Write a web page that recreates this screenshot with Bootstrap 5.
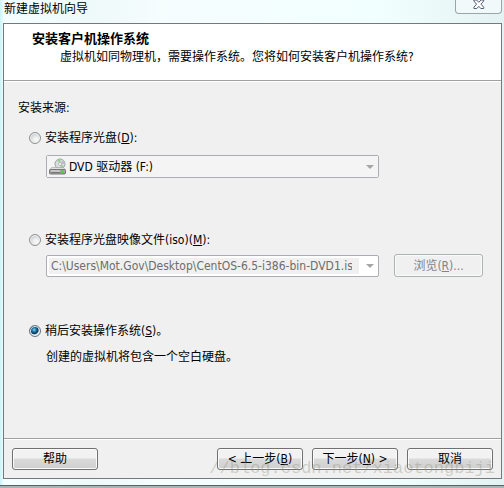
<!DOCTYPE html>
<html lang="zh-CN">
<head>
<meta charset="utf-8">
<meta name="viewport" content="width=device-width, initial-scale=1">
<title>新建虚拟机向导</title>
<link href="https://cdn.jsdelivr.net/npm/bootstrap@5.3.0/dist/css/bootstrap.min.css" rel="stylesheet">
<style>
body { font: 12px/18px "DejaVu Sans Condensed", "Noto Sans CJK SC", sans-serif; color: #000; background: #f0fcfc; }
.wizard { background: linear-gradient(90deg, #c8f4fa 0, #f4fefe 4px, #eef9fa 90px, #f5fdfd 160px, #f2ffff 75%, #e4f2f3 100%); border-bottom: 2px solid #a9b4b4; box-shadow: inset 0 -1px #596264; padding: 0 2px 7px 3px; }
.title-bar { height: 23px; padding-left: 1px; line-height: 18px; }
.close-btn { width: 47px; height: 14px; border: 1px solid #9ba4a8; border-top: 0; border-radius: 0 0 4px 4px; background: #f1f9fa; }
.pane { border: 1px solid #747a7c; background: #f0f0f0; }
.head { height: 57px; padding: 6px 28px; border-bottom: 1px solid #a0a0a0; box-shadow: 0 1px #fff; }
.head h1 { font-size: 13px; line-height: 18px; }
.head p { padding-left: 28px; }
.body-area { padding: 18px 18px 0 14px; }
.choice { padding-left: 11px; }
.choice label { line-height: 20px; }
.detail { padding-left: 17px; }
.radio-dot { appearance: none; width: 12px; height: 12px; margin: 0 4px 0 0; border: 1px solid #8e8f8f; border-radius: 50%; background: radial-gradient(circle at 60% 65%, #f4f4f4 0 20%, #c5c9ce 75%); box-shadow: inset 0 0 0 1px #f4f4f4; }
.radio-dot:checked { border-color: #67747d; background: radial-gradient(circle at 42% 38%, #7ed4f3 0, #176895 28%, #0b3553 46%, #d3dce2 58%); }
.combo { border: 1px solid #abadb3; border-radius: 2px; }
.drive-combo { height: 23px; }
.drive-combo select { appearance: none; display: block; width: 100%; height: 21px; padding: 0 20px 0 22px; border: 0; background: #f4f4f4; color: #000; opacity: 1; }
.drive-icon { left: 2px; top: 2px; }
.combo-arrow { right: 4px; top: 9px; }
.iso-combo { height: 22px; background: #fff; padding: 2px 4px 2px 2px; }
.iso-combo input { min-width: 0; height: 16px; padding: 0 7px 0 2px; border: 0; background: #f0f0f0; color: #6d6d6d; margin-right: 7px; }
.iso-combo button { padding: 0; border: 0; background: none; }
.wiz-btn { --bs-btn-color: #000; --bs-btn-border-color: #707070; --bs-btn-font-size: 12px; --bs-btn-line-height: 18px; --bs-btn-padding-x: 0; --bs-btn-padding-y: 1px; --bs-btn-border-radius: 3px; width: 86px; height: 22px; background: linear-gradient(#f2f2f2 0 45%, #dadada 50%, #cfcfcf); box-shadow: inset 0 0 0 1px #fbfbfb; }
.browse-btn { --bs-btn-disabled-color: #838383; --bs-btn-disabled-border-color: #adb2b5; --bs-btn-disabled-opacity: 1; width: 89px; height: 23px; background: #f4f4f4; margin-left: 15px; }
.source-title { margin-bottom: 11px; }
.gap-first { margin-bottom: 52px; }
.gap-second { margin-bottom: 44px; }
.option-row { margin-bottom: 7px; }
.iso-row { margin-bottom: 4px; }
.browse-space { margin-right: 104px; }
.foot { height: 40px; padding: 1px 8px 0; border-top: 1px solid #a0a0a0; box-shadow: inset 0 1px #fff; gap: 9px; }
.watermark { right: 9px; bottom: 6px; font: 17px/22px "Liberation Mono", monospace; color: rgba(145, 145, 125, .38); pointer-events: none; }
</style>
<script src="https://cdn.jsdelivr.net/npm/bootstrap@5.3.0/dist/js/bootstrap.bundle.min.js"></script>
</head>
<body>
<main class="wizard position-relative min-vh-100 d-flex flex-column">
  <header class="title-bar d-flex justify-content-between align-items-start">
    <span>新建虚拟机向导</span>
    <button type="button" class="close-btn p-0 d-flex justify-content-center align-items-start" aria-label="关闭">
      <svg width="12" height="9" viewBox="0 0 12 9"><path d="M3.500 0 5.800 2.300 8.100 0h2.600v1L8 4.200l2.700 3v1.300H7.800l-2-2.200-2 2.200H.900V7.200l2.700-3L.900 1V0z" fill="#fff" stroke="#555d75" stroke-width="1"/></svg>
    </button>
  </header>
  <section class="pane flex-grow-1 d-flex flex-column">
    <div class="head bg-white">
      <h1 class="fw-bold m-0">安装客户机操作系统</h1>
      <p class="m-0">虚拟机如同物理机，需要操作系统。您将如何安装客户机操作系统?</p>
    </div>
    <form class="body-area flex-grow-1">
      <p class="source-title">安装来源:</p>
      <div class="choice gap-first">
        <div class="option-row d-flex align-items-center">
          <input class="radio-dot" type="radio" name="source" id="disc"><label for="disc">安装程序光盘(<u>D</u>):</label>
        </div>
        <div class="detail">
          <div class="combo drive-combo position-relative browse-space">
            <select aria-label="驱动器" disabled><option>DVD 驱动器 (F:)</option></select>
            <svg class="drive-icon position-absolute" width="17" height="18" viewBox="0 0 17 18">
              <circle cx="11" cy="6" r="5" fill="#d9dedf" stroke="#9da1a3"/>
              <path d="M11 6 8 2q2-2 4-1zM11 6l4 2q-1 3-3 3z" fill="#9fcf98"/><path d="m11 6 3-4q2 2 2 4z" fill="#c9b7d2"/>
              <circle cx="11" cy="6" r="1.500" fill="#fff" stroke="#999" stroke-width=".6"/>
              <path d="M2.500 9.500h12l2 2.500H.500z" fill="#dedede" stroke="#a0a0a0" stroke-width=".6"/>
              <rect x=".5" y="11.500" width="16" height="4.500" rx="1" fill="#a2a2a2" stroke="#777"/>
              <path d="M2 13h9" stroke="#e8e8e8"/><path d="M2 14.500h9" stroke="#777"/><path d="M12 12.500h2.500v2.500H12z" fill="#45d62f"/>
            </svg>
            <svg class="combo-arrow position-absolute" width="8" height="5" viewBox="0 0 8 5"><path d="M0 0h8L4 4z" fill="#a6a6a6"/></svg>
          </div>
        </div>
      </div>
      <div class="choice gap-second">
        <div class="iso-row d-flex align-items-center">
          <input class="radio-dot" type="radio" name="source" id="iso"><label for="iso">安装程序光盘映像文件(iso)(<u>M</u>):</label>
        </div>
        <div class="detail d-flex align-items-end">
          <div class="combo iso-combo d-flex align-items-center flex-grow-1">
            <input class="flex-grow-1" type="text" aria-label="映像文件" value="C:\Users\Mot.Gov\Desktop\CentOS-6.5-i386-bin-DVD1.iso" disabled>
            <button class="d-flex" type="button" aria-label="选择文件" disabled><svg width="8" height="5" viewBox="0 0 8 5"><path d="M0 0h8L4 4z" fill="#a6a6a6"/></svg></button>
          </div>
          <button type="button" class="btn wiz-btn browse-btn" disabled>浏览(<u>R</u>)...</button>
        </div>
      </div>
      <div class="choice">
        <div class="option-row d-flex align-items-center">
          <input class="radio-dot" type="radio" name="source" id="later" checked><label for="later">稍后安装操作系统(<u>S</u>)。</label>
        </div>
        <p class="detail m-0">创建的虚拟机将包含一个空白硬盘。</p>
      </div>
    </form>
    <footer class="foot d-flex align-items-center">
      <button type="button" class="btn wiz-btn me-auto">帮助</button>
      <button type="button" class="btn wiz-btn">&lt; 上一步(<u>B</u>)</button>
      <button type="button" class="btn wiz-btn">下一步(<u>N</u>) &gt;</button>
      <button type="button" class="btn wiz-btn">取消</button>
    </footer>
  </section>
  <div class="watermark position-absolute">//blog.csdn.net/xiaotongbiji</div>
</main>
</body>
</html>
